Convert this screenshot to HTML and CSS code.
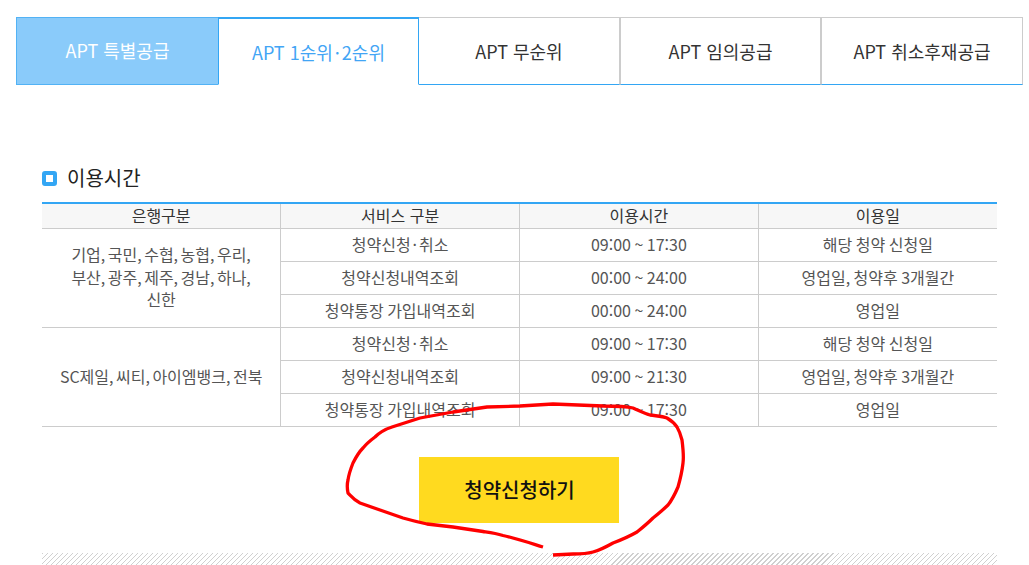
FILE: index.html
```html
<!DOCTYPE html>
<html lang="ko">
<head>
<meta charset="utf-8">
<title>이용시간</title>
<link rel="stylesheet" href="styles.css">
</head>
<body>
<div class="page">
  <nav class="tabs">
    <a class="tab tab-filled">APT 특별공급</a>
    <a class="tab tab-active">APT 1순위<span class="dot">·</span>2순위</a>
    <a class="tab">APT 무순위</a>
    <a class="tab">APT 임의공급</a>
    <a class="tab">APT 취소후재공급</a>
  </nav>
  <section class="content">
    <h2 class="title"><span class="bullet"></span>이용시간</h2>
    <table class="hours">
      <thead>
        <tr><th>은행구분</th><th>서비스 구분</th><th>이용시간</th><th>이용일</th></tr>
      </thead>
      <tbody>
        <tr><td rowspan="3" class="bank">기업, 국민, 수협, 농협, 우리,<br>부산, 광주, 제주, 경남, 하나,<br>신한</td><td>청약신청<span class="dot">·</span>취소</td><td>09:00 ~ 17:30</td><td>해당 청약 신청일</td></tr>
        <tr><td>청약신청내역조회</td><td>00:00 ~ 24:00</td><td>영업일, 청약후 3개월간</td></tr>
        <tr><td>청약통장 가입내역조회</td><td>00:00 ~ 24:00</td><td>영업일</td></tr>
        <tr><td rowspan="3" class="bank">SC제일, 씨티, 아이엠뱅크, 전북</td><td>청약신청<span class="dot">·</span>취소</td><td>09:00 ~ 17:30</td><td>해당 청약 신청일</td></tr>
        <tr><td>청약신청내역조회</td><td>09:00 ~ 21:30</td><td>영업일, 청약후 3개월간</td></tr>
        <tr><td>청약통장 가입내역조회</td><td>09:00 ~ 17:30</td><td>영업일</td></tr>
      </tbody>
    </table>
    <div class="actions"><a class="apply">청약신청하기</a></div>
    <div class="hatch"></div>
  </section>
</div>
<svg class="scribble" width="1029" height="565" viewBox="0 0 1029 565" aria-hidden="true">
  <path d="M543 547 C530 543 515 538 503 535.5 C495 533 490 532.5 483 531.5 L453 527 L427 524 C418 522 410 520 403 518 L380 510 L360 503 C354 500 351 496 348 493 C347 488 347 484 348 480 C349 473 351 468 353 463 C356 457 359 452 363 448 C367 443 371 440 375 437 C380 432 386 429 392 427 L420 418 L453 412 L487 407 L520 406 L553 404 L603 406 C615 406 625 406 633 408 C640 411 645 414 650 415 C656 416 662 416 667 418 C672 421 675 424 677 427 C680 432 681 436 682 440 C683 448 684 456 683 463 C682 472 680 480 678 487 C675 494 672 500 668 505 C663 510 658 514 653 518 C648 523 642 528 637 532 C630 536 621 540 613 543 C606 547 600 550 593 552 C586 554 580 554 573 554 L553 555" fill="none" stroke="#f00" stroke-width="3.3" stroke-linejoin="round"/>
</svg>
</body>
</html>
```
FILE: styles.css
```css
* { box-sizing: border-box; }
html, body { margin: 0; padding: 0; height: 565px; overflow: hidden; background: #fff; }
body { font-family: "Noto Sans CJK KR", "Noto Sans", sans-serif; color: #333; }
.page { padding: 17px 6px 0 16px; }
.tabs { display: grid; grid-template-columns: 202px 200px 202px 201px 202px; height: 68px; }
.tab {
  display: flex; align-items: center; justify-content: center;
  font-size: 18px; color: #333;
  border: 1px solid #ccc; border-bottom-color: #33a6f4;
}
.tab-filled { background: #8acbfa; color: #fff; border-color: #52b2f5; padding-bottom: 2px; margin-right: -1px; }
.tab-active { color: #42a5f5; border: 1px solid #33a6f4; border-top-width: 2px; border-bottom: 1px solid #fff; position: relative; z-index: 1; margin-right: -1px; }
.dot { margin: 0 2px; }
.content { padding: 0 26px 0 26px; }
.title { display: flex; align-items: flex-start; gap: 10px; margin: 77px 0 0; height: 33px; font-size: 20px; font-weight: 400; color: #222; line-height: 31px; }
.bullet { width: 15px; height: 15px; margin-top: 9px; border: 4px solid #33a6f4; border-radius: 3px; background: #fff; }
.hours { width: 955px; margin-top: 7px; border-collapse: collapse; table-layout: fixed; border-top: 2px solid #33a6f4; font-size: 16px; }
.hours th { height: 25px; padding: 0 0 2px; font-weight: 400; color: #333; background: #f7f7f7; border: 1px solid #ccc; border-top: 0; line-height: 22px; }
.hours td { height: 33px; padding: 0 0 2px; text-align: center; color: #555; border: 1px solid #ccc; line-height: 22.5px; word-spacing: -1px; }
.hours th:first-child, .hours td.bank { border-left: 0; }
.hours td.bank { word-spacing: -2px; }
.hours th:last-child, .hours td:last-child { border-right: 0; }
.actions { display: flex; justify-content: center; margin-top: 30px; padding-right: 1px; }
.apply { width: 200px; height: 66px; padding: 0 0 1px 1px; display: flex; align-items: center; justify-content: center; background: #ffda1f; color: #111; font-size: 20px; font-weight: 500; }
.hatch { height: 12px; margin-top: 30px; background: repeating-linear-gradient(135deg, #d0d0d0 0, #d0d0d0 0.9px, #fff 0.9px, #fff 3.54px); }
.scribble { position: absolute; left: 0; top: 0; pointer-events: none; }
```
